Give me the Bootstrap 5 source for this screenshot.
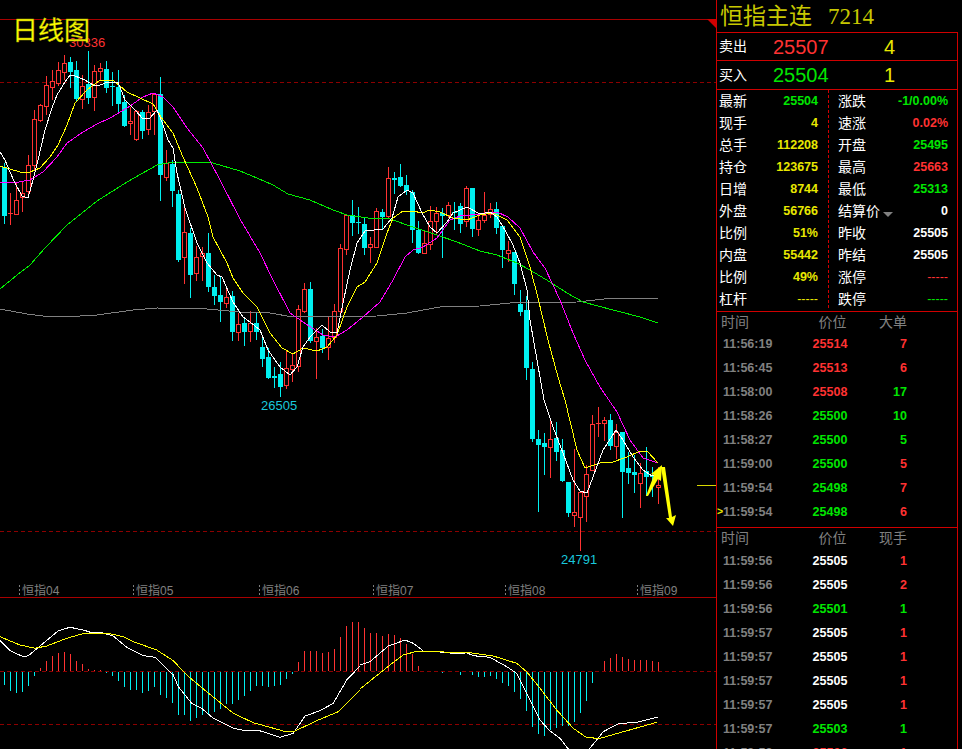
<!DOCTYPE html>
<html lang="zh">
<head>
<meta charset="utf-8">
<title>恒指主连 日线图</title>
<link rel="stylesheet" href="https://cdn.jsdelivr.net/npm/bootstrap@5.3.0/dist/css/bootstrap.min.css">
<style>
html,body{background:#000;margin:0;height:749px;overflow:hidden}
body{font-family:"Liberation Sans","Noto Sans CJK SC",sans-serif;color:#fff}
.term{width:962px;height:749px;background:#000}
.chart-pane{width:716px;height:749px;flex:none}
.chart-pane svg{display:block}
.tx-axis{font-size:12px;fill:#808080}
.tx-title{font-size:26px;fill:#ff0;stroke:#a0a000;stroke-width:.4px}
.tx-hi{font-size:13px;fill:#ff3232}
.tx-lo{font-size:13px;fill:#19c8dc}
.quote-pane{width:242px;flex:none;border-left:1px solid #d00000;height:749px}
.q-title{height:32px;padding-left:3px;color:#c8c800;font-size:23px;line-height:33px;white-space:nowrap;flex:none}
.q-title b{font-weight:400;letter-spacing:0}
.q-title i{font-style:normal;font-family:"Liberation Serif",serif;margin-left:16px}
.q-box{border-top:1px solid #d00000;border-right:1px solid #d00000;flex:1;min-height:0}
.q-box>div{flex:none}
.bid-line{border-bottom:1px solid #d00000;align-items:center;padding-left:2px}
.bid-a{height:28px}
.bid-b{height:29px}
.bid-lab{width:54px;font-size:14px}
.bid-price{width:111px;font-size:20px;line-height:1}
.bid-vol{font-size:20px;line-height:1;color:#e8e800}
.stat-wrap{height:222px;border-bottom:1px solid #d00000}
.stat-l{width:112px;padding:0 10px 0 2px;border-right:1px dashed #d00000;height:218px;flex:none}
.stat-r{width:128px;padding:0 9px 0 9px;flex:none}
.stat-line{height:22px;flex:none;align-items:center;justify-content:space-between;font-size:14px;white-space:nowrap}
.num{font-size:12.5px;font-weight:700}
.thin{font-weight:400}
.tr-y{color:#e8e800}.tr-r{color:#ff3232}.tr-g{color:#00e600}.tr-w{color:#fff}.tr-t{color:#808080}
.tick-wrap-a{height:216px;border-bottom:1px solid #d00000}
.tick-head{align-items:center;color:#808080;font-size:14px}
.th-a{height:20px}
.th-b{height:21px}
.c-time{width:89px;padding-left:4px;flex:none;position:relative}
.c-price{width:48px;text-align:center;flex:none}
.tick-head .c-price{padding-left:5px}
.c-vol{width:53px;text-align:right;flex:none}
.tick-line{height:24px;align-items:center;font-size:12.5px;font-weight:700}
.tick-line .c-time{padding-left:6px}
.cur-mark{position:absolute;left:0;top:1px;color:#e8e800;font-size:10.5px;font-weight:700}
.caret-mark{display:inline-block;width:0;height:0;border-left:5px solid transparent;border-right:5px solid transparent;border-top:5px solid #808080;margin-left:3px;vertical-align:-1px}
</style>
</head>
<body>
<div class="term d-flex overflow-hidden">
  <div class="chart-pane">
    <svg id="kline" width="716" height="749" viewBox="0 0 716 749" xmlns="http://www.w3.org/2000/svg" font-family="'Liberation Sans','Noto Sans CJK SC',sans-serif">
      <g shape-rendering="crispEdges">
        <rect x="0" y="19" width="716" height="1" fill="#a80000"/>
        <rect x="0" y="597" width="716" height="1" fill="#a80000"/>
        <line x1="0" x2="716" y1="82.5" y2="82.5" stroke="#8c0000" stroke-dasharray="4 3"/>
        <line x1="0" x2="716" y1="531.5" y2="531.5" stroke="#8c0000" stroke-dasharray="4 3"/>
        <line x1="0" x2="716" y1="671.5" y2="671.5" stroke="#8c0000" stroke-dasharray="4 3"/>
        <line x1="0" x2="716" y1="724.5" y2="724.5" stroke="#8c0000" stroke-dasharray="4 3"/>
        <rect x="697" y="485" width="19" height="1" fill="#d8d800"/>
        <g stroke="#808080" stroke-dasharray="2 2">
          <line x1="19.5" x2="19.5" y1="585" y2="597"/><line x1="133.5" x2="133.5" y1="585" y2="597"/>
          <line x1="259.5" x2="259.5" y1="585" y2="597"/><line x1="373.5" x2="373.5" y1="585" y2="597"/>
          <line x1="505.5" x2="505.5" y1="585" y2="597"/><line x1="637.5" x2="637.5" y1="585" y2="597"/>
        </g>
      </g>
      <g id="candles" shape-rendering="crispEdges"></g>
      <g id="hist" shape-rendering="crispEdges"></g>
      <g id="lines" fill="none" shape-rendering="crispEdges"></g>
      <polygon points="707,19 716,19 716,28" fill="#d00000"/>
      <polygon fill="#ff0" points="646,496 654,475 651,474 662,465 661,481 658,479 648,496"/>
      <polygon fill="#ff0" points="661,467 665,467 672,517 676,515 673,526 666,518 669,518"/>
      <text class="tx-hi" x="69" y="47">30336</text>
      <text class="tx-lo" x="261" y="410">26505</text>
      <text class="tx-lo" x="561" y="564">24791</text>
      <text class="tx-title" x="12" y="40">日线图</text>
      <text class="tx-axis" x="22" y="595">恒指04</text>
      <text class="tx-axis" x="136" y="595">恒指05</text>
      <text class="tx-axis" x="262" y="595">恒指06</text>
      <text class="tx-axis" x="376" y="595">恒指07</text>
      <text class="tx-axis" x="508" y="595">恒指08</text>
      <text class="tx-axis" x="640" y="595">恒指09</text>
    </svg>
  </div>
  <div class="quote-pane d-flex flex-column">
    <div class="q-title"><b>恒指主连</b><i>7214</i></div>
    <div class="q-box d-flex flex-column overflow-hidden">
      <div class="bid-line bid-a d-flex"><span class="bid-lab">卖出</span><span class="bid-price tr-r">25507</span><span class="bid-vol">4</span></div>
      <div class="bid-line bid-b d-flex"><span class="bid-lab">买入</span><span class="bid-price tr-g">25504</span><span class="bid-vol">1</span></div>
      <div class="stat-wrap d-flex">
        <div class="stat-l d-flex flex-column">
          <div class="stat-line d-flex"><span>最新</span><span class="num tr-g">25504</span></div>
          <div class="stat-line d-flex"><span>现手</span><span class="num tr-y">4</span></div>
          <div class="stat-line d-flex"><span>总手</span><span class="num tr-y">112208</span></div>
          <div class="stat-line d-flex"><span>持仓</span><span class="num tr-y">123675</span></div>
          <div class="stat-line d-flex"><span>日增</span><span class="num tr-y">8744</span></div>
          <div class="stat-line d-flex"><span>外盘</span><span class="num tr-y">56766</span></div>
          <div class="stat-line d-flex"><span>比例</span><span class="num tr-y">51%</span></div>
          <div class="stat-line d-flex"><span>内盘</span><span class="num tr-y">55442</span></div>
          <div class="stat-line d-flex"><span>比例</span><span class="num tr-y">49%</span></div>
          <div class="stat-line d-flex"><span>杠杆</span><span class="num thin tr-y">-----</span></div>
        </div>
        <div class="stat-r d-flex flex-column">
          <div class="stat-line d-flex"><span>涨跌</span><span class="num tr-g">-1/0.00%</span></div>
          <div class="stat-line d-flex"><span>速涨</span><span class="num tr-r">0.02%</span></div>
          <div class="stat-line d-flex"><span>开盘</span><span class="num tr-g">25495</span></div>
          <div class="stat-line d-flex"><span>最高</span><span class="num tr-r">25663</span></div>
          <div class="stat-line d-flex"><span>最低</span><span class="num tr-g">25313</span></div>
          <div class="stat-line d-flex"><span>结算价<span class="caret-mark"></span></span><span class="num tr-w">0</span></div>
          <div class="stat-line d-flex"><span>昨收</span><span class="num tr-w">25505</span></div>
          <div class="stat-line d-flex"><span>昨结</span><span class="num tr-w">25505</span></div>
          <div class="stat-line d-flex"><span>涨停</span><span class="num thin tr-r">-----</span></div>
          <div class="stat-line d-flex"><span>跌停</span><span class="num thin tr-g">-----</span></div>
        </div>
      </div>
      <div class="tick-wrap-a">
        <div class="tick-head th-a d-flex"><span class="c-time">时间</span><span class="c-price">价位</span><span class="c-vol">大单</span></div>
        <div class="tick-line d-flex"><span class="c-time tr-t">11:56:19</span><span class="c-price tr-r">25514</span><span class="c-vol tr-r">7</span></div>
        <div class="tick-line d-flex"><span class="c-time tr-t">11:56:45</span><span class="c-price tr-r">25513</span><span class="c-vol tr-r">6</span></div>
        <div class="tick-line d-flex"><span class="c-time tr-t">11:58:00</span><span class="c-price tr-r">25508</span><span class="c-vol tr-g">17</span></div>
        <div class="tick-line d-flex"><span class="c-time tr-t">11:58:26</span><span class="c-price tr-g">25500</span><span class="c-vol tr-g">10</span></div>
        <div class="tick-line d-flex"><span class="c-time tr-t">11:58:27</span><span class="c-price tr-g">25500</span><span class="c-vol tr-g">5</span></div>
        <div class="tick-line d-flex"><span class="c-time tr-t">11:59:00</span><span class="c-price tr-g">25500</span><span class="c-vol tr-r">5</span></div>
        <div class="tick-line d-flex"><span class="c-time tr-t">11:59:54</span><span class="c-price tr-g">25498</span><span class="c-vol tr-r">7</span></div>
        <div class="tick-line d-flex"><span class="c-time tr-t"><span class="cur-mark">&gt;</span>11:59:54</span><span class="c-price tr-g">25498</span><span class="c-vol tr-r">6</span></div>
      </div>
      <div>
        <div class="tick-head th-b d-flex"><span class="c-time">时间</span><span class="c-price">价位</span><span class="c-vol">现手</span></div>
        <div class="tick-line d-flex"><span class="c-time tr-t">11:59:56</span><span class="c-price tr-w">25505</span><span class="c-vol tr-r">1</span></div>
        <div class="tick-line d-flex"><span class="c-time tr-t">11:59:56</span><span class="c-price tr-w">25505</span><span class="c-vol tr-r">2</span></div>
        <div class="tick-line d-flex"><span class="c-time tr-t">11:59:56</span><span class="c-price tr-g">25501</span><span class="c-vol tr-g">1</span></div>
        <div class="tick-line d-flex"><span class="c-time tr-t">11:59:57</span><span class="c-price tr-w">25505</span><span class="c-vol tr-r">1</span></div>
        <div class="tick-line d-flex"><span class="c-time tr-t">11:59:57</span><span class="c-price tr-w">25505</span><span class="c-vol tr-r">1</span></div>
        <div class="tick-line d-flex"><span class="c-time tr-t">11:59:57</span><span class="c-price tr-w">25505</span><span class="c-vol tr-r">1</span></div>
        <div class="tick-line d-flex"><span class="c-time tr-t">11:59:57</span><span class="c-price tr-w">25505</span><span class="c-vol tr-r">1</span></div>
        <div class="tick-line d-flex"><span class="c-time tr-t">11:59:57</span><span class="c-price tr-g">25503</span><span class="c-vol tr-g">1</span></div>
        <div class="tick-line d-flex"><span class="c-time tr-t">11:59:58</span><span class="c-price tr-r">25506</span><span class="c-vol tr-r">1</span></div>
      </div>
    </div>
  </div>
</div>
<script src="https://cdn.jsdelivr.net/npm/bootstrap@5.3.0/dist/js/bootstrap.bundle.min.js"></script>
<script>
(function(){
var NS='http://www.w3.org/2000/svg';
function el(p,n,a){var e=document.createElementNS(NS,n);for(var k in a)e.setAttribute(k,a[k]);p.appendChild(e);return e;}
// [type, high, bodyTop, bodyBottom, low]  c=cyan, r=red
var K=[
['c',163,167,216,224],['r',193,213,214,225],['r',182,200,214,215],['r',182,193,197,212],['r',155,165,191,197],
['r',110,119,165,170],['r',104,105,120,122],['r',76,85,106,115],['r',70,81,87,100],['r',62,70,83,86],
['r',55,63,72,80],['c',57,62,72,88],['c',61,70,99,102],['r',75,86,99,109],['c',51,84,98,104],
['r',65,71,97,111],['r',63,68,71,80],['c',61,69,88,93],['c',72,86,87,106],['c',70,87,104,114],
['c',95,102,126,127],['r',107,121,123,135],['r',110,111,139,141],['c',110,112,131,139],['r',105,112,129,135],
['r',93,94,111,135],['c',77,94,175,201],['r',150,163,177,181],['c',160,164,191,207],['c',190,194,260,262],
['r',208,232,257,284],['c',228,233,275,298],['r',246,257,273,281],['r',247,253,256,281],['c',233,253,287,292],
['c',275,287,296,305],['c',277,295,302,322],['r',288,297,303,308],['c',291,296,332,341],['r',313,324,332,341],
['c',319,323,332,346],['r',311,323,331,342],['c',312,323,332,340],['c',336,347,359,367],['c',348,357,378,379],
['c',367,376,378,388],['c',362,374,387,397],['r',350,368,385,389],['r',353,365,369,382],['r',305,309,366,372],
['r',283,289,311,313],['c',282,289,341,343],['r',328,337,341,379],['c',329,336,348,353],['r',317,338,347,360],
['r',304,311,337,343],['r',244,248,311,317],['r',215,215,249,255],['c',200,215,223,236],['c',207,222,223,234],
['c',218,224,248,255],['r',237,244,247,263],['r',208,211,247,247],['c',209,212,217,229],['r',167,178,216,218],
['c',172,178,180,194],['c',164,177,186,187],['c',175,185,191,195],['c',190,192,230,243],['c',221,230,253,254],
['r',231,243,253,253],['r',206,221,244,250],['r',207,213,221,235],['c',208,213,216,258],['r',202,205,215,218],
['c',202,212,213,230],['c',203,206,224,233],['r',186,188,221,227],['c',188,188,229,237],['r',213,220,229,236],
['r',192,215,220,223],['r',203,209,214,218],['c',202,209,228,234],['c',225,226,250,268],['r',241,250,253,262],
['c',252,252,284,295],['c',290,304,312,316],['c',296,310,368,380],['c',362,369,439,442],['c',430,439,445,512],
['c',433,443,447,475],['r',419,439,447,478],['c',422,438,452,461],['c',439,450,481,482],['c',482,482,513,517],
['r',449,512,515,527],['r',492,492,517,551],['r',465,474,496,522],['r',415,424,470,470],['r',407,423,424,437],
['r',417,420,423,441],['c',414,420,446,450],['r',424,432,446,459],['c',432,432,472,518],['c',452,468,473,484],
['c',455,472,475,493],['r',463,473,483,508],['c',447,471,477,496],['c',467,475,477,497],['r',467,485,487,504]];
var g=document.getElementById('candles');
K.forEach(function(k,i){
  var x=2+6*i,col=k[0]=='c'?'#00f0f0':'#ff3232';
  el(g,'rect',{x:x+2,y:k[1],width:1,height:k[4]-k[1],fill:col});
  if(k[0]=='c'){el(g,'rect',{x:x,y:k[2],width:5,height:Math.max(k[3]-k[2],1),fill:col});}
  else if(k[3]-k[2]<2){el(g,'rect',{x:x,y:k[2],width:5,height:1,fill:col});}
  else{el(g,'rect',{x:x+.5,y:k[2]+.5,width:4,height:k[3]-k[2],fill:'#000',stroke:col});}
});
// MACD histogram: end of each bar in the 3x crop coordinates
var H=[345,363,369,366,348,318,294,273,258,249,246,252,273,282,297,300,300,308,318,333,351,360,360,369,363,351,375,384,399,435,436,453,444,435,432,426,417,402,402,390,378,363,348,348,351,348,345,327,312,276,243,243,243,249,246,237,201,168,156,156,174,189,189,198,192,195,204,222,252,288,304,306,306,308,306,306,316,304,315,321,321,318,327,339,348,366,387,423,471,492,498,480,474,468,468,456,429,393,339,304,273,264,252,261,267,270,270,270,273,276];
var gh=document.getElementById('hist');
H.forEach(function(z,i){
  var y=Math.round(570+z/3),x=4+6*i;
  if(y==671)return;
  if(y<671)el(gh,'rect',{x:x,y:y,width:1,height:671-y,fill:'#ff3232'});
  else el(gh,'rect',{x:x,y:672,width:1,height:y-672,fill:'#00f0f0'});
});
var L=[
['#808080','0,309 27,314 43,316 80,316 97,315 133,310 157,308 207,309 240,312 270,313 293,317 377,316 407,313 440,307 480,306 510,303 577,302 613,298 643,298 658,299'],
['#00ee00','0,289 17,275 30,265 45,248 67,225 97,201 127,182 157,165 173,162 193,162 213,163 240,171 257,178 273,185 288,194 310,200 333,210 347,215 368,218 390,219 413,227 437,235 457,242 480,251 497,255 517,263 530,270 550,282 567,293 583,302 613,310 640,317 658,323'],
['#ff00ff','0,182 13,183 30,180 43,172 57,157 67,143 83,132 97,124 110,118 127,108 143,97 153,93 163,97 173,107 187,128 203,148 220,180 240,219 260,253 273,280 290,313 303,322 323,335 335,337 347,330 363,317 380,302 393,280 405,257 413,250 423,247 437,238 450,220 460,216 480,214 497,212 508,217 520,228 533,252 545,268 560,300 573,333 585,360 600,387 617,412 630,440 643,458 658,463'],
['#ffff00','0,166 10,169 20,172 30,172 40,168 50,157 58,145 67,125 75,103 87,90 100,80 113,80 127,92 140,98 153,104 163,120 173,133 183,157 197,188 208,217 213,237 227,263 233,278 243,293 257,307 270,333 282,348 293,354 303,348 317,351 327,347 337,335 347,307 357,287 365,282 377,263 387,233 393,218 403,211 413,211 422,213 430,210 440,212 453,218 467,220 480,215 493,213 507,220 520,237 530,267 538,298 548,340 558,377 565,400 577,450 585,468 600,463 613,462 627,457 638,452 647,451 658,463'],
['#ffffff','0,152 5,160 10,172 15,183 22,196 28,198 33,180 38,160 45,130 52,108 57,95 65,82 70,75 75,76 85,80 93,85 100,85 108,82 118,82 125,100 135,110 143,119 150,118 157,110 162,122 168,140 173,148 177,173 185,208 197,243 207,263 217,275 222,277 233,302 243,317 250,322 260,330 268,350 280,367 290,375 297,367 303,347 310,337 322,325 330,332 337,333 343,303 350,270 357,243 365,231 383,229 392,218 398,197 407,190 413,193 422,213 430,227 437,233 447,222 453,213 467,207 480,214 490,212 497,217 505,230 513,245 520,263 527,290 530,320 537,360 544,400 553,427 563,453 573,480 580,491 587,493 593,477 603,450 616,430 623,440 633,457 643,470 652,476 658,473']
];
var gl=document.getElementById('lines');
L.forEach(function(l){el(gl,'polyline',{points:l[1],stroke:l[0],'stroke-width':1});});
function z(px,ox){return px.map(function(p){return ((p[0]/3)+ox).toFixed(1)+','+(570+p[1]/3).toFixed(1);}).join(' ');}
var w1=[[0,212],[30,242],[70,260],[85,257],[130,220],[175,182],[210,172],[250,180],[275,188],[300,187],[340,198],[380,232],[430,257],[465,262],[520,315],[535,350],[575,400],[605,415],[640,445],[700,475],[740,483],[775,481],[840,502],[880,490],[915,438],[960,422],[1000,400],[1040,330],[1080,288]];
var w2=[[0,285],[30,275],[85,228],[135,210],[160,220],[190,243],[240,246],[300,252],[320,248],[340,257],[390,262],[440,290],[470,310],[500,370],[540,450],[570,483],[600,505],[625,537],[640,560]];
var w3=[[670,560],[688,537],[730,485],[775,461],[830,457],[895,441]];
var y1=[[0,200],[60,225],[105,235],[140,228],[200,205],[245,192],[325,190],[370,200],[400,215],[470,240],[520,272],[560,315],[620,365],[700,430],[760,458],[850,483],[885,483],[950,452],[1015,425],[1080,360]];
var y2=[[0,357],[40,325],[90,285],[130,255],[170,244],[330,248],[400,258],[470,280],[500,305],[540,355],[590,420],[640,475],[680,503],[720,505],[780,488],[890,457]];
[['#fff',w1,0],['#fff',w2,360],['#fff',w3,360],['#ff0',y1,0],['#ff0',y2,360]].forEach(function(m){
  el(gl,'polyline',{points:z(m[1],m[2]),stroke:m[0],'stroke-width':1});
});
})();
</script>
</body>
</html>
